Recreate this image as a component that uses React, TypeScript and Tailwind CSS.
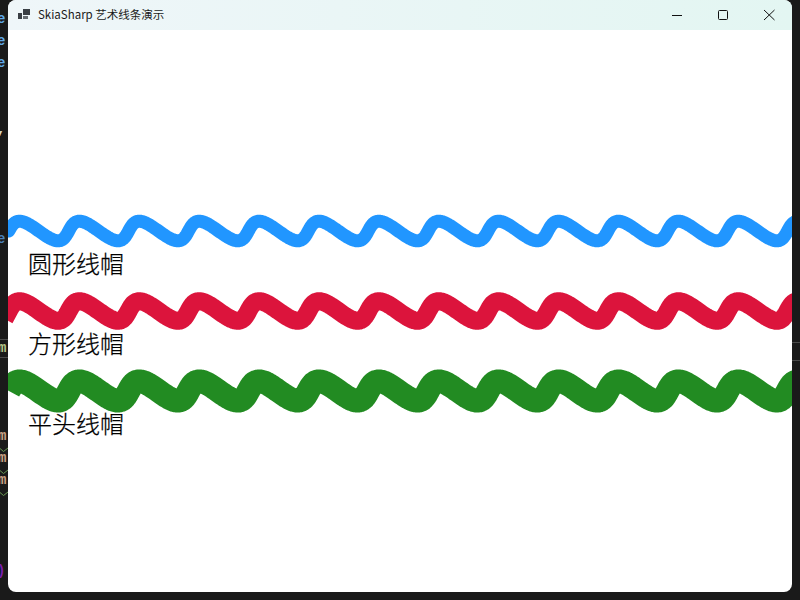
import React from 'react';

const FONT = { fontFamily: '"Noto Sans CJK SC", "Liberation Sans", sans-serif' };

// skewed sine starting mid-height at the window's left edge: steep rise, long fall
function wavePath(centerY: number, amp: number) {
  const period = 59.9;
  const firstPeak = 11.5; // local x of the first crest
  const skew = 4.3;
  const points: string[] = [];
  for (let t = -Math.PI / 2; t < 90; t += 0.1) {
    const x = firstPeak + (period * t) / (Math.PI * 2) + skew * (1 - Math.cos(t));
    const y = centerY - amp * Math.cos(t);
    points.push(`${x.toFixed(2)},${y.toFixed(2)}`);
  }
  return 'M' + points.join('L');
}

interface WaveRowProps {
  color: string;
  width: number;
  cap: 'round' | 'square' | 'butt';
  label: string;
}

function WaveRow({ color, width, cap, label }: WaveRowProps) {
  return (
    <div className="h-20 flex flex-col">
      <svg className="w-full h-10 shrink-0 overflow-visible" viewBox="0 0 784 40">
        <path
          d={wavePath(21, 9.8)}
          fill="none"
          stroke={color}
          strokeWidth={width}
          strokeLinecap={cap}
          strokeLinejoin="round"
        />
      </svg>
      <div className="pl-5 -mt-px h-7 text-2xl leading-7 font-light text-black [-webkit-text-stroke:0.25px_black]" style={FONT}>
        {label}
      </div>
    </div>
  );
}

function Line({ children, color }: { children?: React.ReactNode; color?: string }) {
  return <div className={`h-[22px] leading-[22px] -ml-[3px] ${color}`}>{children}</div>;
}

function TanLine() {
  return (
    <>
      <div className="h-5 leading-4 -ml-[2px] text-[#c9a285]">m</div>
      <svg className="w-2 h-1 -mb-[2px] shrink-0 overflow-visible" viewBox="0 0 8 4" fill="none" stroke="#6a9955">
        <path d="M0 0.5L3.5 3.5L8 0" />
      </svg>
    </>
  );
}

export default function App() {
  return (
    <div className="w-[800px] h-[600px] flex bg-[#1a1a1a] overflow-hidden">
      {/* editor peeking out behind the window, on its 22px line grid */}
      <div className="w-2 shrink-0 pt-2 flex flex-col overflow-hidden font-['Liberation_Mono'] text-sm font-bold">
        <Line color="text-[#5fa8e6]">e</Line>
        <Line color="text-[#5fa8e6]">e</Line>
        <Line color="text-[#5fa8e6]">e</Line>
        <Line />
        <Line />
        <Line color="text-[#d8d8c8]">,</Line>
        <Line />
        <Line />
        <Line />
        <Line />
        <Line color="text-[#4a80b8]">e</Line>
        <Line />
        <Line />
        <Line />
        <Line />
        <div className="mt-px mb-[2px] h-[19px] leading-[17px] border-y border-[#4a4a4a] text-[#b5c78a] -ml-[2px]">m</div>
        <Line />
        <Line />
        <Line />
        <div className="h-[2px]" />
        <TanLine />
        <TanLine />
        <TanLine />
        <Line />
        <Line />
        <Line />
        <Line color="text-[#7a1fb0]">)</Line>
      </div>

      {/* window */}
      <div className="w-[784px] h-[592px] shrink-0 rounded-lg bg-white flex flex-col overflow-hidden">
        <div
          className="h-[30px] shrink-0 flex items-center bg-gradient-to-r from-[#eff6f9] to-[#e3f6f2] text-[11.5px] text-[#1a1a1a]"
          style={FONT}
        >
          <svg className="ml-[10px] mr-2 w-3 h-[11px] -mt-[1px]" viewBox="0 0 12 11" fill="#3a3f45">
            <rect x="5" y="0" width="7" height="6" />
            <rect x="0" y="4" width="4" height="6" />
            <rect x="5" y="7" width="5" height="3" opacity="0.75" />
          </svg>
          <span>SkiaSharp 艺术线条演示</span>
          <div className="ml-auto flex items-center -mt-px">
            <svg className="w-[46px] h-3" viewBox="0 0 46 12" fill="none" stroke="#111" strokeWidth="1">
              <path d="M18 6.5H28" />
            </svg>
            <svg className="w-[46px] h-3" viewBox="0 0 46 12" fill="none" stroke="#111" strokeWidth="1">
              <rect x="18.5" y="1.5" width="9" height="9" rx="1" />
            </svg>
            <svg className="w-[46px] h-3" viewBox="0 0 46 12" fill="none" stroke="#111" strokeWidth="1">
              <path d="M18 1L28.5 11M28.5 1L18 11" />
            </svg>
          </div>
        </div>
        <div className="pt-[180px]">
          <WaveRow color="#2196ff" width={13} cap="round" label="圆形线帽" />
          <WaveRow color="#dc143c" width={18} cap="square" label="方形线帽" />
          <WaveRow color="#228b22" width={23.5} cap="butt" label="平头线帽" />
        </div>
      </div>

      <div className="w-2 shrink-0 pt-[342px]">
        <div className="h-[19px] border-y border-[#4a4a4a]" />
      </div>
    </div>
  );
}
